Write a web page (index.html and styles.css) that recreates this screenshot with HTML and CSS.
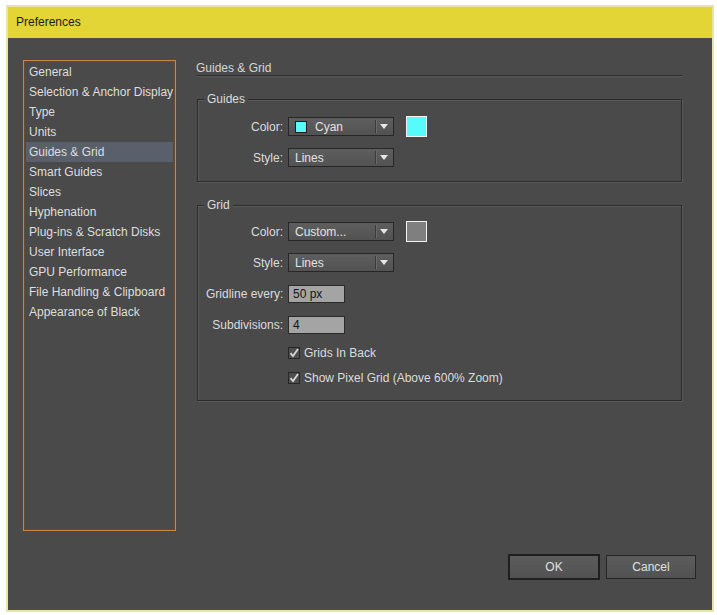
FILE: index.html
```html
<!DOCTYPE html>
<html>
<head>
<meta charset="utf-8">
<title>Preferences</title>
<link rel="stylesheet" href="styles.css">
</head>
<body>
<div class="window">
  <div class="titlebar">Preferences</div>
  <div class="content">
    <div class="main">
      <ul class="sidebar">
        <li>General</li>
        <li>Selection &amp; Anchor Display</li>
        <li>Type</li>
        <li>Units</li>
        <li class="selected">Guides &amp; Grid</li>
        <li>Smart Guides</li>
        <li>Slices</li>
        <li>Hyphenation</li>
        <li>Plug-ins &amp; Scratch Disks</li>
        <li>User Interface</li>
        <li>GPU Performance</li>
        <li>File Handling &amp; Clipboard</li>
        <li>Appearance of Black</li>
      </ul>
      <div class="panel">
        <div class="heading">Guides &amp; Grid</div>
        <div class="group guides">
          <span class="legend">Guides</span>
          <div class="form">
            <label class="lbl">Color:</label>
            <div class="ctrl">
              <div class="select"><span class="chip cyan"></span><span class="val">Cyan</span><span class="sep"></span><span class="arrow"></span></div>
              <span class="swatch cyan"></span>
            </div>
            <label class="lbl">Style:</label>
            <div class="ctrl">
              <div class="select"><span class="val">Lines</span><span class="sep"></span><span class="arrow"></span></div>
            </div>
          </div>
        </div>
        <div class="group grid">
          <span class="legend">Grid</span>
          <div class="form">
            <label class="lbl">Color:</label>
            <div class="ctrl">
              <div class="select"><span class="val">Custom...</span><span class="sep"></span><span class="arrow"></span></div>
              <span class="swatch gray"></span>
            </div>
            <label class="lbl">Style:</label>
            <div class="ctrl">
              <div class="select"><span class="val">Lines</span><span class="sep"></span><span class="arrow"></span></div>
            </div>
            <label class="lbl">Gridline every:</label>
            <div class="ctrl"><div class="input">50 px</div></div>
            <label class="lbl">Subdivisions:</label>
            <div class="ctrl"><div class="input">4</div></div>
            <div class="check c1"><span class="box"><svg width="10" height="10" viewBox="0 0 10 10"><path d="M1.5 5.2 L4 8 L9 1" fill="none" stroke="#d8d8d8" stroke-width="1.8"/></svg></span>Grids In Back</div>
            <div class="check c2"><span class="box"><svg width="10" height="10" viewBox="0 0 10 10"><path d="M1.5 5.2 L4 8 L9 1" fill="none" stroke="#d8d8d8" stroke-width="1.8"/></svg></span>Show Pixel Grid (Above 600% Zoom)</div>
          </div>
        </div>
      </div>
    </div>
    <div class="footer">
      <button class="btn ok">OK</button>
      <button class="btn cancel">Cancel</button>
    </div>
  </div>
</div>
</body>
</html>
```
FILE: styles.css
```css
html, body {
  margin: 0;
  padding: 0;
  background: #ffffff;
}
body {
  font-family: "Liberation Sans", Arial, sans-serif;
  font-size: 12px;
}
.window {
  margin: 5px 0 0 6px;
  width: 704px;
  height: 603px;
  border: 2px solid #e9e5a8;
  display: flex;
  flex-direction: column;
}
.titlebar {
  height: 31px;
  flex: none;
  background: #e2d535;
  color: #1b1b1b;
  line-height: 31px;
  padding-left: 8px;
  box-sizing: border-box;
}
.content {
  flex: 1;
  background: #4a4a4a;
  display: flex;
  flex-direction: column;
  padding: 22px 16px 0 15px;
}
.main {
  display: flex;
  gap: 20px;
}
.sidebar {
  list-style: none;
  margin: 0;
  padding: 1px;
  width: 149px;
  height: 467px;
  border: 1px solid #c4884a;
  box-shadow: inset 0 0 0 1px #6a4a2b;
  background: #4a4a4a;
  flex: none;
}
.sidebar li {
  height: 19px;
  line-height: 19px;
  padding-top: 1px;
  padding-left: 4px;
  color: #dedede;
  white-space: nowrap;
}
.sidebar li.selected {
  background: #5a606b;
  margin: 0 1px;
  padding-left: 3px;
}
.panel {
  flex: 1;
  display: flex;
  flex-direction: column;
}
.heading {
  color: #d6d6d6;
  line-height: 14px;
  padding-top: 1px;
  width: 486px;
  border-bottom: 1px solid #2e2e2e;
  box-shadow: 0 1px 0 #555555;
}
.group {
  position: relative;
  box-sizing: border-box;
  margin-left: 1px;
  width: 485px;
  border: 1px solid #2b2b2b;
  box-shadow: 1px 1px 0 #5a5a5a, inset 1px 1px 0 #5a5a5a;
}
.guides {
  margin-top: 23px;
  padding: 17px 0 14px 8px;
}
.grid {
  margin-top: 23px;
  padding: 16px 0 15px 8px;
}
.legend {
  position: absolute;
  top: -8px;
  left: 6px;
  padding: 0 3px;
  line-height: 14px;
  background: #4a4a4a;
  color: #dcdcdc;
}
.form {
  display: grid;
  grid-template-columns: 77px auto;
  column-gap: 5px;
  row-gap: 12px;
  align-items: center;
}
.lbl {
  text-align: right;
  color: #dcdcdc;
  white-space: nowrap;
}
.ctrl {
  display: flex;
  align-items: center;
  gap: 12px;
  height: 19px;
}
.select {
  width: 104px;
  height: 17px;
  border: 1px solid #262626;
  background: linear-gradient(#5e5e5e, #525252);
  display: flex;
  align-items: center;
  color: #e2e2e2;
  flex: none;
}
.chip {
  width: 10px;
  height: 10px;
  border: 1px solid #1e1e1e;
  margin-left: 6px;
  margin-right: 2px;
}
.cyan { background: #55fbfd; }
.gray { background: #7f7f7f; }
.val {
  padding-left: 6px;
  flex: 1;
}
.sep {
  width: 1px;
  height: 13px;
  background: #3a3a3a;
  box-shadow: 1px 0 0 #6a6a6a;
}
.arrow {
  width: 0;
  height: 0;
  border-left: 4px solid transparent;
  border-right: 4px solid transparent;
  border-top: 5px solid #e6e6e6;
  margin: 0 5px 0 4px;
}
.swatch {
  width: 19px;
  height: 19px;
  border: 1px solid #f2f2f2;
  flex: none;
}
.input {
  width: 51px;
  height: 16px;
  line-height: 16px;
  border: 1px solid #2a2a2a;
  background: #a4a4a4;
  color: #141414;
  padding-left: 4px;
}
.check {
  grid-column: 2;
  display: flex;
  align-items: center;
  gap: 4px;
  color: #dcdcdc;
  height: 14px;
  white-space: nowrap;
}
.check.c2 { margin-top: -1px; }
.box {
  width: 10px;
  height: 10px;
  border: 1px solid #262626;
  background: #4e4e4e;
  display: flex;
  align-items: center;
  justify-content: center;
}
.footer {
  margin-top: 23px;
  display: flex;
  justify-content: flex-end;
  align-items: center;
  gap: 6px;
}
.btn {
  font-family: "Liberation Sans", Arial, sans-serif;
  font-size: 12px;
  color: #e0e0e0;
  background: linear-gradient(#5c5c5c, #525252);
  padding: 0;
  margin: 0;
}
.ok {
  width: 92px;
  height: 26px;
  border: 2px solid #1f1f1f;
}
.cancel {
  width: 90px;
  height: 24px;
  border: 1px solid #262626;
}
```
